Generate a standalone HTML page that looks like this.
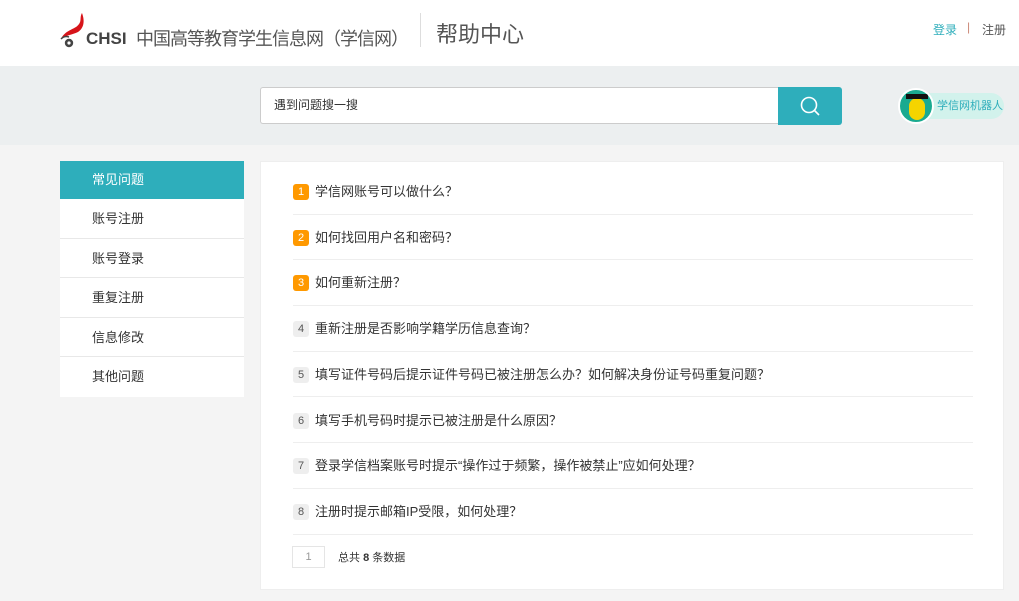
<!DOCTYPE html>
<html><head><meta charset="utf-8"><style>
*{margin:0;padding:0;box-sizing:border-box}
body{width:1019px;height:601px;background:#f4f4f4;font-family:"Liberation Sans","Noto Sans CJK SC",sans-serif;position:relative;overflow:hidden;color:#333}
.hdr{position:absolute;left:0;top:0;width:1019px;height:66px;background:#fff}
.band{position:absolute;left:0;top:66px;width:1019px;height:79px;background:#eceff0}
.abs{position:absolute}
.side{position:absolute;left:60px;top:161px;width:184px;background:#fff}
.side div{height:39.5px;line-height:39px;padding-left:32px;font-size:13px;color:#333;border-bottom:1px solid #e8e8e8}
.side div.on{background:#2eaebb;color:#fff;border:none;height:38px;line-height:38px}
.panel{position:absolute;left:260px;top:161px;width:744px;height:429px;background:#fff;border:1px solid #eee}
.row{position:absolute;left:32px;width:680px;height:45.7px;border-bottom:1px solid #eee;font-size:13px;color:#333}
.row span.n{position:absolute;left:0;top:15px;width:16px;height:16px;border-radius:3px;background:#eee;color:#555;font-size:11px;text-align:center;line-height:16px}
.row span.n.o{background:#f90;color:#fff}
.row span.t{position:absolute;left:22px;top:14px;line-height:18px}
</style></head><body>
<div class="hdr">
<svg class="abs" style="left:58px;top:12px" width="34" height="36" viewBox="0 0 34 36">
<path d="M24 1c-3 5 1 9-6 14-5 3-12 5-15 12 5-4 11-4 17-7 6-4 7-11 4-19z" fill="#d7141a"/>
<path d="M3 27c2-2 5-3 8-2" stroke="#444" stroke-width="1.5" fill="none"/>
<circle cx="11" cy="31" r="4.2" fill="#444"/><circle cx="11" cy="31" r="1.6" fill="#fff"/>
</svg>
<div class="abs" style="left:86px;top:29px;font-size:17px;font-weight:bold;color:#444">CHSI</div>
<div class="abs" style="left:136px;top:25px;font-size:18px;color:#555;letter-spacing:-1px;white-space:nowrap">中国高等教育学生信息网（学信网）</div>
<div class="abs" style="left:420px;top:13px;width:1px;height:34px;background:#ddd"></div>
<div class="abs" style="left:436px;top:17px;font-size:22px;color:#555">帮助中心</div>
<div class="abs" style="left:933px;top:21px;font-size:12px;color:#2eaebb">登录</div>
<div class="abs" style="left:967px;top:20px;font-size:12px;color:#c87">|</div>
<div class="abs" style="left:982px;top:21px;font-size:12px;color:#555">注册</div>
</div>
<div class="band">
<div class="abs" style="left:260px;top:21px;width:518px;height:37px;background:#fff;border:1px solid #ccc;border-right:none;border-radius:3px 0 0 3px;font-size:12px;line-height:35px;padding-left:13px;color:#333">遇到问题搜一搜</div>
<div class="abs" style="left:778px;top:21px;width:64px;height:38px;background:#2eaebb;border-radius:0 3px 3px 0">
<svg width="64" height="38"><circle cx="31" cy="18" r="7.5" fill="none" stroke="#fff" stroke-width="1.6"/><line x1="36.5" y1="23.5" x2="41" y2="28" stroke="#fff" stroke-width="1.6"/></svg></div>
<div class="abs" style="left:910px;top:27px;width:94px;height:26px;background:#d2f2ec;border-radius:13px;font-size:11px;color:#2eaebb;line-height:26px;padding-left:27px">学信网机器人</div>
<div class="abs" style="left:898px;top:22px;width:36px;height:36px;border-radius:50%;background:#1aaa90;border:2px solid #fff;overflow:hidden">
<div style="position:absolute;left:9px;top:8px;width:16px;height:22px;background:#f5d400;border-radius:8px"></div>
<div style="position:absolute;left:6px;top:4px;width:22px;height:5px;background:#111"></div></div>
</div>
<div class="side">
<div class="on">常见问题</div><div>账号注册</div><div>账号登录</div><div>重复注册</div><div>信息修改</div><div style="border:none">其他问题</div>
</div>
<div class="panel">
<div class="row" style="top:7px"><span class="n o">1</span><span class="t">学信网账号可以做什么？</span></div>
<div class="row" style="top:52.7px"><span class="n o">2</span><span class="t">如何找回用户名和密码？</span></div>
<div class="row" style="top:98.4px"><span class="n o">3</span><span class="t">如何重新注册？</span></div>
<div class="row" style="top:144.1px"><span class="n">4</span><span class="t">重新注册是否影响学籍学历信息查询？</span></div>
<div class="row" style="top:189.8px"><span class="n">5</span><span class="t">填写证件号码后提示证件号码已被注册怎么办？如何解决身份证号码重复问题？</span></div>
<div class="row" style="top:235.5px"><span class="n">6</span><span class="t">填写手机号码时提示已被注册是什么原因？</span></div>
<div class="row" style="top:281.2px"><span class="n">7</span><span class="t">登录学信档案账号时提示“操作过于频繁，操作被禁止”应如何处理？</span></div>
<div class="row" style="top:326.9px"><span class="n">8</span><span class="t">注册时提示邮箱IP受限，如何处理？</span></div>
<div class="abs" style="left:31px;top:384px;width:33px;height:22px;border:1px solid #e5e5e5;font-size:11px;color:#999;text-align:center;line-height:20px">1</div>
<div class="abs" style="left:77px;top:387px;font-size:11px;color:#333">总共 <b>8</b> 条数据</div>
</div>
</body></html>
